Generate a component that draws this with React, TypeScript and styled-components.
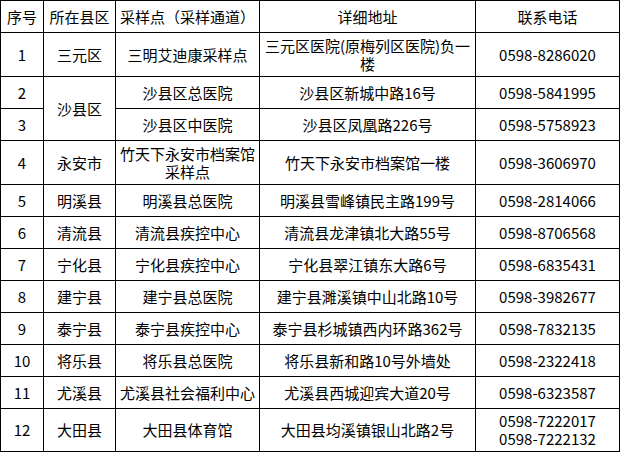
import styled, { createGlobalStyle } from 'styled-components'

const GlobalStyle = createGlobalStyle`
    html, body {
        margin: 0;
        padding: 0;
        background: #ffffff;
    }
    body {
        font-family: "Noto Sans CJK SC", "Noto Sans", sans-serif;
        color: #000000;
    }
`

const Table = styled.div`
    display: grid;
    grid-template-columns: 42px 71px 143px 215px 143px;
    grid-template-rows: 31px 43px 31px 31px 43px repeat(7, 31px) 42px;
    gap: 1px;
    padding: 1px;
    width: 620px;
    box-sizing: border-box;
    background: #000000;
`

const Cell = styled.div<{ $span?: number }>`
    display: flex;
    align-items: center;
    justify-content: center;
    text-align: center;
    background: #ffffff;
    font-size: 15px;
    line-height: 18px;
    padding: 0 1px;
    grid-row: ${(p) => (p.$span ? `span ${p.$span}` : 'auto')};
    overflow: hidden;
`

const Phones = styled.div`
    display: flex;
    flex-direction: column;
    line-height: 18px;
`

type Row = {
    no: string
    county?: string
    countySpan?: number
    site: string
    address: React.ReactNode
    phone: string[]
}

const headers = ['序号', '所在县区', '采样点（采样通道）', '详细地址', '联系电话']

const rows: Row[] = [
    {
        no: '1',
        county: '三元区',
        site: '三明艾迪康采样点',
        address: (
            <>
                三元区医院(原梅列区医院)负一
                <br />楼
            </>
        ),
        phone: ['0598-8286020'],
    },
    {
        no: '2',
        county: '沙县区',
        countySpan: 2,
        site: '沙县区总医院',
        address: '沙县区新城中路16号',
        phone: ['0598-5841995'],
    },
    {
        no: '3',
        site: '沙县区中医院',
        address: '沙县区凤凰路226号',
        phone: ['0598-5758923'],
    },
    {
        no: '4',
        county: '永安市',
        site: '竹天下永安市档案馆采样点',
        address: '竹天下永安市档案馆一楼',
        phone: ['0598-3606970'],
    },
    {
        no: '5',
        county: '明溪县',
        site: '明溪县总医院',
        address: '明溪县雪峰镇民主路199号',
        phone: ['0598-2814066'],
    },
    {
        no: '6',
        county: '清流县',
        site: '清流县疾控中心',
        address: '清流县龙津镇北大路55号',
        phone: ['0598-8706568'],
    },
    {
        no: '7',
        county: '宁化县',
        site: '宁化县疾控中心',
        address: '宁化县翠江镇东大路6号',
        phone: ['0598-6835431'],
    },
    {
        no: '8',
        county: '建宁县',
        site: '建宁县总医院',
        address: '建宁县濉溪镇中山北路10号',
        phone: ['0598-3982677'],
    },
    {
        no: '9',
        county: '泰宁县',
        site: '泰宁县疾控中心',
        address: '泰宁县杉城镇西内环路362号',
        phone: ['0598-7832135'],
    },
    {
        no: '10',
        county: '将乐县',
        site: '将乐县总医院',
        address: '将乐县新和路10号外墙处',
        phone: ['0598-2322418'],
    },
    {
        no: '11',
        county: '尤溪县',
        site: '尤溪县社会福利中心',
        address: '尤溪县西城迎宾大道20号',
        phone: ['0598-6323587'],
    },
    {
        no: '12',
        county: '大田县',
        site: '大田县体育馆',
        address: '大田县均溪镇银山北路2号',
        phone: ['0598-7222017', '0598-7222132'],
    },
]

export default function App() {
    return (
        <>
            <GlobalStyle />
            <Table>
                {headers.map((h) => (
                    <Cell key={h}>{h}</Cell>
                ))}
                {rows.map((row) => (
                    <div key={row.no} style={{ display: 'contents' }}>
                        <Cell>{row.no}</Cell>
                        {row.county && (
                            <Cell $span={row.countySpan}>{row.county}</Cell>
                        )}
                        <Cell>{row.site}</Cell>
                        <Cell>{row.address}</Cell>
                        <Cell>
                            <Phones>
                                {row.phone.map((p) => (
                                    <span key={p}>{p}</span>
                                ))}
                            </Phones>
                        </Cell>
                    </div>
                ))}
            </Table>
        </>
    )
}
